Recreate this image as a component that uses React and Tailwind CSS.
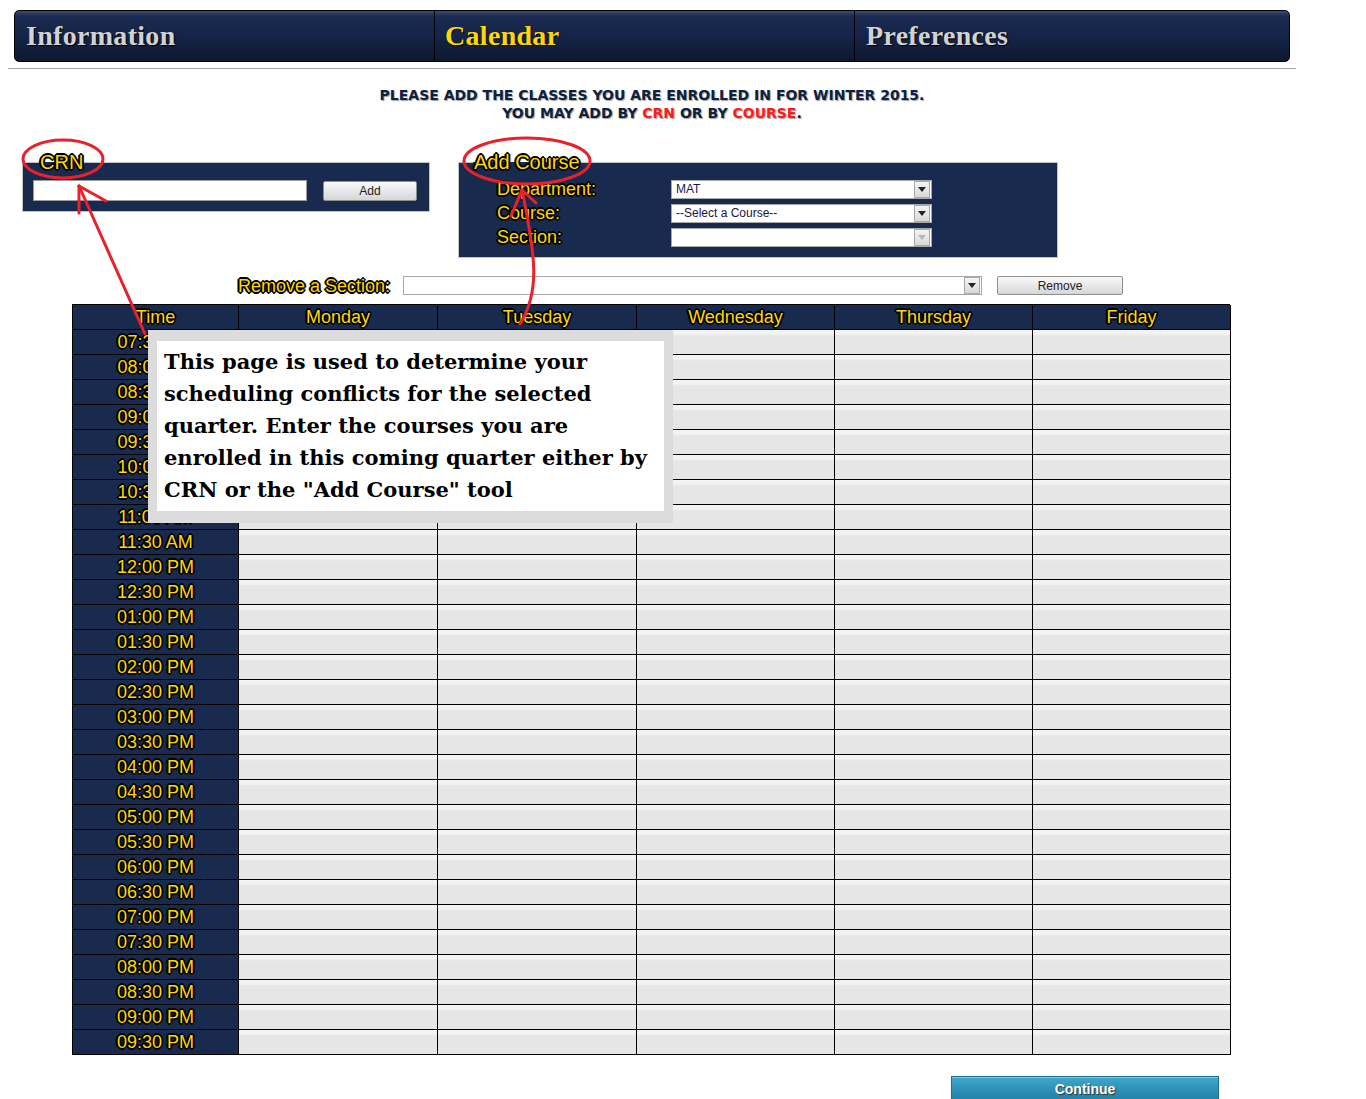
import React from "react";

const outline =
  "text-[#ffd800] [text-shadow:-1px_-1px_0_#000,1px_-1px_0_#000,-1px_1px_0_#000,1px_1px_0_#000,0_-2px_0_#000,0_2px_0_#000,-2px_0_0_#000,2px_0_0_#000,0_0_2px_#000]";

const days = ["Monday", "Tuesday", "Wednesday", "Thursday", "Friday"];

const times = [];
for (let h = 7; h <= 21; h++) {
  for (const m of ["00", "30"]) {
    if (h === 7 && m === "00") continue;
    const hr12 = h > 12 ? h - 12 : h;
    times.push(`${String(hr12).padStart(2, "0")}:${m} ${h >= 12 ? "PM" : "AM"}`);
  }
}

function Arrow({ disabled }) {
  return (
    <div className="w-[16px] h-[17px] border border-[#a9a9a9] bg-[linear-gradient(to_bottom,#f4f4f4,#d9d9d9)] flex items-center justify-center">
      <svg width="8" height="5" viewBox="0 0 8 5">
        <polygon points="0,0 8,0 4,5" fill={disabled ? "#b8b8b8" : "#222"} />
      </svg>
    </div>
  );
}

function Select({ value, width, disabled }) {
  return (
    <div
      className="h-[19px] bg-white border border-[#a8a8a8] flex items-center justify-between pl-[4px] pr-px"
      style={{ width }}
    >
      <span className="text-[12px] text-[#1b1446] leading-none">{value}</span>
      <Arrow disabled={disabled} />
    </div>
  );
}

export default function App() {
  return (
    <div className="relative w-[1366px] h-[1099px] overflow-hidden bg-white font-['Liberation_Sans',Arial,sans-serif]">
      {/* top tabs */}
      <div className="mt-[10px] ml-[14px] w-[1276px] h-[52px] flex border border-black rounded-[5px] overflow-hidden bg-[linear-gradient(to_bottom,#3a4c74_0px,#1b2b52_5px,#152448_50%,#0e1830_100%)] font-['Liberation_Serif',Georgia,serif] font-bold text-[28px] tracking-[0.3px]">
        <div className="w-[419px] flex items-center pl-[11px] text-[#d2d2d2] [text-shadow:1px_1px_1px_#000]">Information</div>
        <div className="w-[420px] border-l border-black flex items-center pl-[10px] text-[#ffd800] [text-shadow:1px_1px_1px_#000]">Calendar</div>
        <div className="flex-1 border-l border-black flex items-center pl-[11px] text-[#d2d2d2] [text-shadow:1px_1px_1px_#000]">Preferences</div>
      </div>
      <div className="ml-[8px] w-[1288px]">
        <div className="mt-[6px] h-px bg-[#a4a4a4]" />

        <div className="mt-[17px] text-center font-['DejaVu_Sans',Verdana,sans-serif] font-bold text-[14px] leading-[18px] text-[#0c2242] [text-shadow:1px_1px_1px_#a0a0a0]">
          <div>PLEASE ADD THE CLASSES YOU ARE ENROLLED IN FOR WINTER 2015.</div>
          <div>
            YOU MAY ADD BY <span className="text-[#ff1a1a]">CRN</span> OR BY{" "}
            <span className="text-[#ff1a1a]">COURSE</span>.
          </div>
        </div>

        {/* add panels */}
        <div className="mt-[29px] flex items-start">
          <fieldset className="ml-[14px] w-[408px] border border-[#c4c4c4] bg-[#182a4d] p-0 m-0 min-w-0">
            <legend className={`ml-[16px] px-[1px] text-[20px] leading-[22px] ${outline}`}>CRN</legend>
            <div className="flex items-start pt-[7px] pb-[10px]">
              <div className="ml-[10px] w-[274px] h-[21px] bg-white border border-[#9c9c9c]" />
              <button className="ml-[16px] mt-px w-[94px] h-[20px] rounded-[2px] border border-[#8e8e8e] bg-[linear-gradient(to_bottom,#fafafa,#e8e8e8_50%,#d6d6d6)] text-[12px] text-[#222] leading-none">
                Add
              </button>
            </div>
          </fieldset>

          <fieldset className="ml-[28px] w-[600px] border border-[#c4c4c4] bg-[#182a4d] p-0 m-0 min-w-0">
            <legend className={`ml-[14px] px-[1px] text-[20px] leading-[22px] ${outline}`}>Add Course</legend>
            <div className="pt-[4px] pb-[8px] pl-[38px]">
              {[
                ["Department:", "MAT", false],
                ["Course:", "--Select a Course--", false],
                ["Section:", "", true],
              ].map(([label, val, dis]) => (
                <div key={label} className="h-[24px] flex items-center">
                  <div className={`w-[174px] text-[18px] leading-none ${outline}`}>{label}</div>
                  <Select value={val} width={261} disabled={dis} />
                </div>
              ))}
            </div>
          </fieldset>
        </div>

        {/* remove row */}
        <div className="mt-[18px] flex items-center h-[19px]">
          <div className={`ml-[230px] w-[153px] text-[18px] leading-none whitespace-nowrap ${outline}`}>Remove a Section:</div>
          <div className="ml-[12px]">
            <Select value="" width={579} />
          </div>
          <button className="ml-[15px] w-[126px] h-[19px] rounded-[2px] border border-[#8e8e8e] bg-[linear-gradient(to_bottom,#fafafa,#e8e8e8_50%,#d6d6d6)] text-[12px] text-[#222] leading-none">
            Remove
          </button>
        </div>

        {/* calendar */}
        <div className="relative mt-[9px] ml-[64px] w-[1158px]">
          <div className="grid grid-cols-[166px_199px_199px_198px_198px_198px] auto-rows-[25px] border-l border-t border-black">
            <div className={`bg-[#182a4d] border-r border-b border-black text-center text-[18px] leading-[24px] ${outline}`}>Time</div>
            {days.map((d) => (
              <div key={d} className={`bg-[#182a4d] border-r border-b border-black text-center text-[18px] leading-[24px] ${outline}`}>
                {d}
              </div>
            ))}
            {times.map((t) => (
              <React.Fragment key={t}>
                <div className={`bg-[#182a4d] border-r border-b border-black text-center text-[18px] leading-[24px] ${outline}`}>{t}</div>
                {days.map((d) => (
                  <div
                    key={d}
                    className="border-r border-b border-black bg-[linear-gradient(to_bottom,#f3f3f3_0px,#f3f3f3_4px,#e6e6e6_6px,#e6e6e6_100%)]"
                  />
                ))}
              </React.Fragment>
            ))}
          </div>

          {/* help note over the grid */}
          <div className="absolute left-[76px] top-[26px] w-[525px] h-[193px] bg-[#dcdcdc] pt-[11px] pl-[9px]">
            <div className="w-[507px] h-[170px] bg-white pl-[7px] pt-[5px] font-['DejaVu_Serif',Georgia,serif] font-bold text-[21px] leading-[32px] text-black whitespace-nowrap">
              This page is used to determine your
              <br />
              scheduling conflicts for the selected
              <br />
              quarter. Enter the courses you are
              <br />
              enrolled in this coming quarter either by
              <br />
              CRN or the "Add Course" tool
            </div>
          </div>
        </div>

        <button className="mt-[21px] ml-[943px] w-[268px] h-[26px] border border-[#1c6d8e] bg-[linear-gradient(to_bottom,#3fa9cc,#2b8db2_60%,#2181a6)] text-white font-bold text-[14px] leading-none [text-shadow:1px_1px_1px_#333] shadow-[inset_0_1px_0_#7fcbe4]">
          Continue
        </button>
      </div>

      {/* red annotations */}
      <svg className="absolute left-0 top-0 pointer-events-none" width="1366" height="1099">
        <g fill="none" stroke="#e8212b" strokeWidth="3" strokeLinecap="round">
          <ellipse cx="63" cy="159" rx="40" ry="19" />
          <ellipse cx="527" cy="161" rx="63" ry="23" />
          <path d="M145 334 L79 186" />
          <path d="M79 186 L79 213" />
          <path d="M79 186 L106 201" />
          <path d="M520 324 C 540 292, 536 258, 522 190" />
          <path d="M522 190 L511 216" />
          <path d="M522 190 L536 203" />
        </g>
      </svg>
    </div>
  );
}
